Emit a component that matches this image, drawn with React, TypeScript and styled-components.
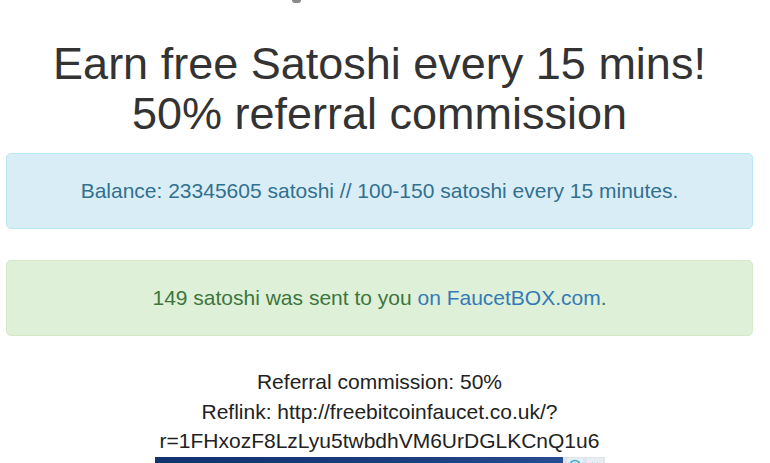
import React from "react";
import styled, { createGlobalStyle } from "styled-components";

const Global = createGlobalStyle`
  html, body { margin: 0; padding: 0; background: #fff; }
  body { font-family: "Liberation Sans", Arial, sans-serif; color: #333; overflow: hidden; }
`;

const Page = styled.div`
  width: 747px;
  margin-left: 6px;
  display: flex;
  flex-direction: column;
  align-items: stretch;
`;

const TopStrip = styled.div`
  height: 39px;
  display: flex;
  align-items: flex-start;
  padding-left: 286px;
`;

const Descender = styled.span`
  display: block;
  width: 9px;
  height: 3px;
  background: #8a8a8a;
  border-radius: 0 0 5px 5px;
`;

const Title = styled.h1`
  margin: 0 0 14px;
  font-size: 45px;
  line-height: 50px;
  font-weight: 400;
  text-align: center;
  color: #333;
`;

const Alert = styled.div<{ $tone: "info" | "success" }>`
  box-sizing: border-box;
  height: 76px;
  border-radius: 5px;
  border: 1px solid ${(p) => (p.$tone === "info" ? "#bce8f1" : "#d6e9c6")};
  background: ${(p) => (p.$tone === "info" ? "#d9edf7" : "#dff0d8")};
  color: ${(p) => (p.$tone === "info" ? "#31708f" : "#3c763d")};
  display: flex;
  align-items: center;
  justify-content: center;
  font-size: 21px;
  line-height: 28px;
  margin-bottom: 31px;
`;

const Link = styled.a`
  color: #337ab7;
  text-decoration: none;
`;

const Info = styled.div`
  text-align: center;
  font-size: 21px;
  line-height: 29.5px;
  color: #222;
`;

const Banner = styled.div`
  align-self: center;
  width: 450px;
  height: 60px;
  margin-top: 1px;
  display: flex;
  justify-content: flex-end;
  align-items: flex-start;
  background: linear-gradient(90deg, #123270 0%, #1c3f80 60%, #2a5094 100%);
`;

const AdIcons = styled.div`
  display: flex;
  gap: 4px;
  padding: 1px 2px 0 4px;
  background: rgba(255, 255, 255, 0.85);
`;

const AdIcon = styled.span`
  width: 16px;
  height: 16px;
  display: flex;
  align-items: center;
  justify-content: center;
  background: #e6eef1;
`;

export default function App() {
  return (
    <>
      <Global />
      <Page>
        <TopStrip>
          <Descender />
        </TopStrip>
        <Title>
          Earn free Satoshi every 15 mins!
          <br />
          50% referral commission
        </Title>
        <Alert $tone="info">
          Balance: 23345605 satoshi // 100-150 satoshi every 15 minutes.
        </Alert>
        <Alert $tone="success">
          <span>
            149 satoshi was sent to you <Link href="#">on FaucetBOX.com</Link>.
          </span>
        </Alert>
        <Info>
          Referral commission: 50%
          <br />
          Reflink: http://freebitcoinfaucet.co.uk/?
          <br />
          r=1FHxozF8LzLyu5twbdhVM6UrDGLKCnQ1u6
        </Info>
        <Banner>
          <AdIcons>
            <AdIcon>
              <svg width="14" height="14" viewBox="0 0 14 14">
                <circle cx="7" cy="7" r="5.5" fill="none" stroke="#39a9d6" strokeWidth="1.5" />
                <rect x="6.3" y="6" width="1.4" height="4" fill="#39a9d6" />
                <circle cx="7" cy="4.3" r="0.8" fill="#39a9d6" />
              </svg>
            </AdIcon>
            <AdIcon>
              <svg width="12" height="12" viewBox="0 0 12 12">
                <path d="M3 3 L9 9 M9 3 L3 9" stroke="#39a9d6" strokeWidth="1.5" />
              </svg>
            </AdIcon>
          </AdIcons>
        </Banner>
      </Page>
    </>
  );
}
